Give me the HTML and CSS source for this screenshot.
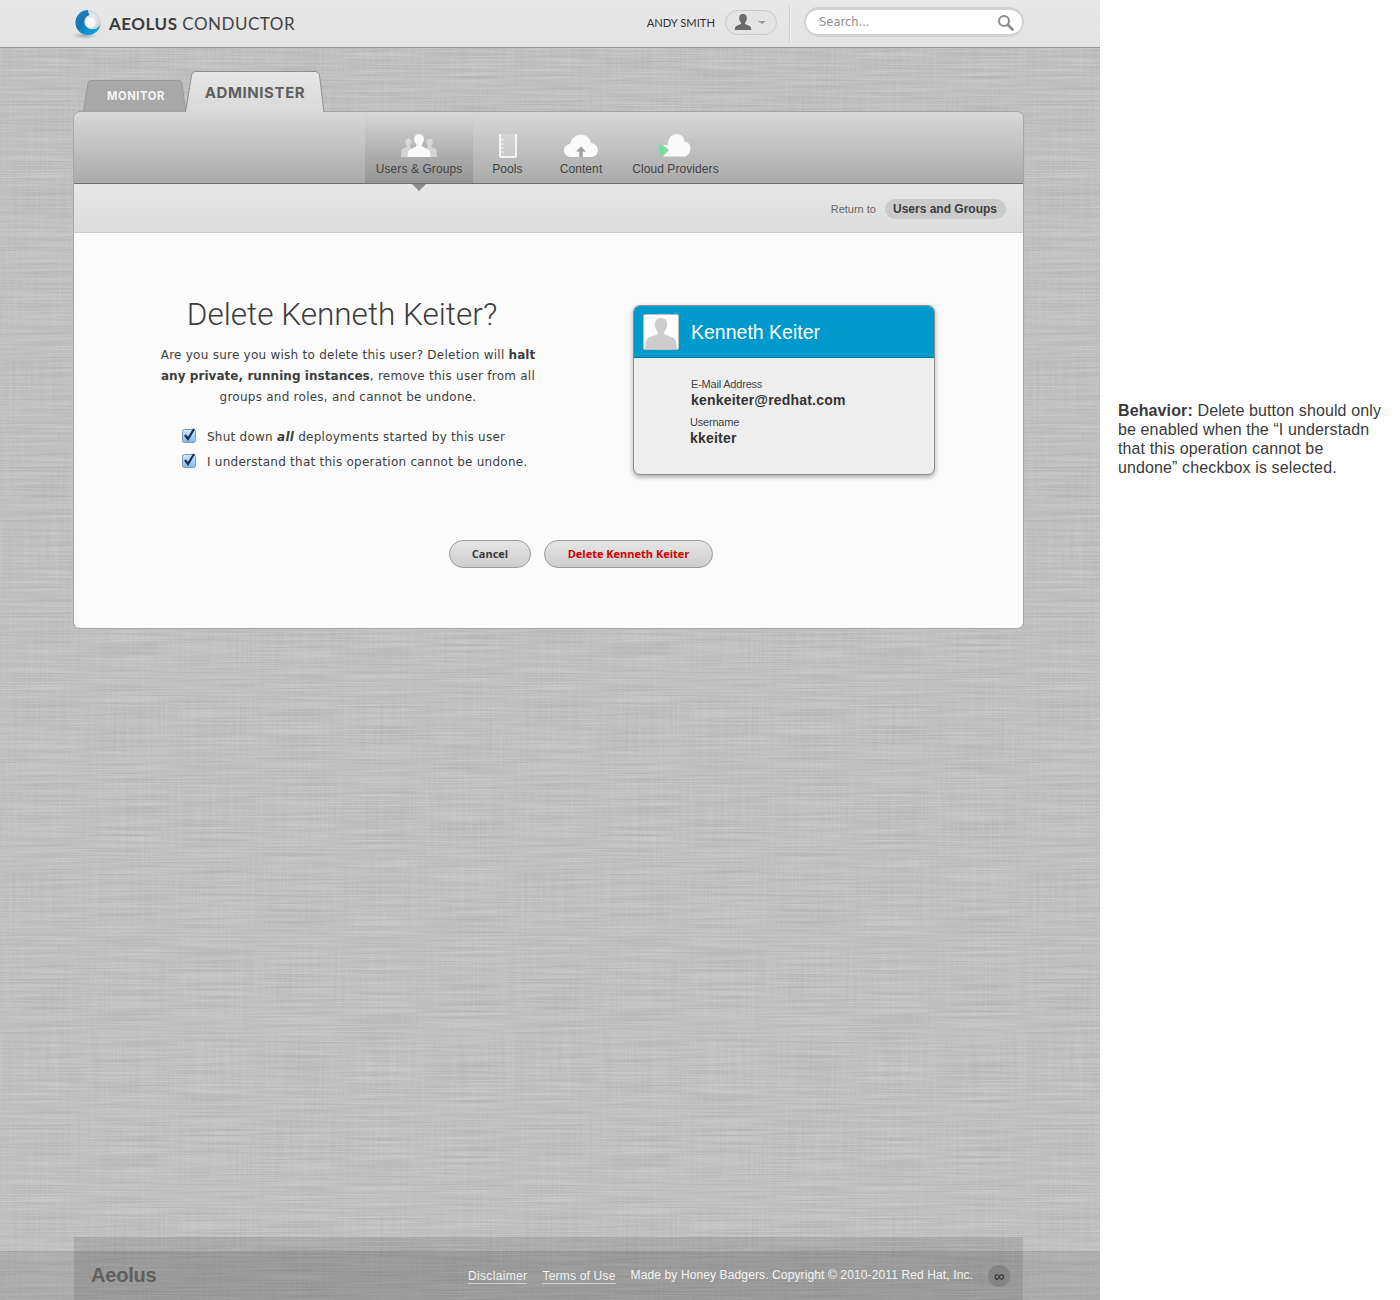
FILE: index.html
```html
<!DOCTYPE html>
<html lang="en">
<head>
<meta charset="utf-8">
<title>Aeolus Conductor</title>
<link rel="stylesheet" href="styles.css">
</head>
<body>
<div class="layout">
  <div class="main">
    <header class="topbar">
      <div class="topbar-inner">
        <div class="brand">
          <svg class="logo" width="32" height="32" viewBox="0 0 32 32">
            <defs>
              <radialGradient id="sphere" cx="0.6" cy="0.4" r="0.62"><stop offset="0" stop-color="#ffffff"/><stop offset="0.5" stop-color="#dadde2"/><stop offset="1" stop-color="#aab2bd"/></radialGradient>
              <linearGradient id="blue" x1="0" y1="0" x2="0.7" y2="1"><stop offset="0" stop-color="#2f7fb5"/><stop offset="0.5" stop-color="#1079b8"/><stop offset="1" stop-color="#0ea4dc"/></linearGradient>
              <radialGradient id="drop" cx="0.5" cy="0.5" r="0.5"><stop offset="0" stop-color="#6f8296" stop-opacity=".6"/><stop offset="1" stop-color="#6f8296" stop-opacity="0"/></radialGradient>
            </defs>
            <ellipse cx="13" cy="27.500" rx="13" ry="3.500" fill="url(#drop)"/>
            <circle cx="16" cy="14.500" r="12.500" fill="url(#sphere)"/>
            <path d="M16 2C9 2 3.500 7.500 3.500 14.500S9 27 16 27c6.300 0 11.300-4.500 12.300-10.300-1.500 2.700-4.800 4.800-8.300 4.500-4.500-.4-7.800-3.700-7.500-8 .2-3.400 2.300-5.600 5.300-6.300C16.500 5.800 16 4 16 2z" fill="url(#blue)"/>
            <circle cx="18.500" cy="14.500" r="5.600" fill="#f8f9fa" stroke="#c9ced4" stroke-width=".6"/>
          </svg>
          <span class="brand-name"><b>AEOLUS</b> CONDUCTOR</span>
        </div>
        <div class="top-right">
          <span class="user-name">ANDY SMITH</span>
          <button class="user-btn" type="button" aria-label="User menu">
            <svg width="20" height="17" viewBox="0 0 20 17"><path d="M10 0c-2.800 0-4 2.100-3.800 4.400.1 1.700.8 3.100 1.700 4 .4.500.2 1.400-.5 1.800-1.700.9-5 1.500-5.400 3.600L1.700 16h16.600l-.3-2.200c-.4-2.100-3.700-2.700-5.400-3.600-.7-.4-.9-1.300-.5-1.800.9-.9 1.600-2.300 1.700-4C14 2.100 12.800 0 10 0z" fill="#6a6a6a"/></svg>
            <span class="caret"></span>
          </button>
          <span class="divider"></span>
          <div class="search">
            <span class="search-field">
              <span class="search-text">Search...</span>
              <svg width="17" height="17" viewBox="0 0 17 17"><circle cx="7" cy="7" r="5" fill="none" stroke="#8d8d8d" stroke-width="2"/><path d="M10.800 10.800l4.700 4.700" stroke="#8d8d8d" stroke-width="2.800" stroke-linecap="round"/></svg>
            </span>
          </div>
        </div>
      </div>
    </header>

    <div class="container">
      <nav class="tabs">
        <a class="tab tab-monitor">
          <svg class="tab-shape" width="104" height="31" viewBox="0 0 104 31"><path d="M.5 31L5 3C5.400 1.500 6.500.5 8 .5h88c1.500 0 2.700 1 3 2.500l3.500 28z" fill="#a8a8a8" stroke="#9a9a9a"/></svg>
          <span class="tab-label">MONITOR</span>
        </a>
        <a class="tab tab-administer">
          <svg class="tab-shape" width="140" height="41" viewBox="0 0 140 41"><defs><linearGradient id="tabg" x1="0" y1="0" x2="0" y2="1"><stop offset="0" stop-color="#e6e6e6"/><stop offset="1" stop-color="#d9d9d9"/></linearGradient></defs><path d="M.5 41L6.500 4.500C7 2 8.500.5 11 .5h119c2.500 0 4 1.500 4.500 4L139 41" fill="url(#tabg)" stroke="#8e8e8e"/></svg>
          <span class="tab-label">ADMINISTER</span>
        </a>
      </nav>

      <section class="panel">
        <div class="nav">
          <a class="nav-item nav-active">
            <svg width="36" height="26" viewBox="0 0 36 26">
              <g fill="#ececec" opacity=".6"><path d="M7.500 5.500c-2.500 0-3.500 2-3.300 4 .1 1.300.7 2.500 1.400 3.200.3.500.1 1-.4 1.400C3.500 15 .8 15.500.4 17.500L0 24h7l.5-5 3-3.500-1-1.300c-.5-.4-.7-.9-.4-1.500.7-.7 1.300-1.900 1.400-3.200.2-2-.8-4-3.500-4z"/><path d="M28.500 5.500c2.500 0 3.500 2 3.300 4-.1 1.300-.7 2.500-1.400 3.200-.3.500-.1 1 .4 1.400 1.700.9 4.400 1.400 4.800 3.400L36 24h-7l-.5-5-3-3.500 1-1.300c.5-.4.7-.9.4-1.500-.7-.7-1.300-1.900-1.400-3.200-.2-2 .8-4 3.500-4z"/></g>
              <path d="M18 1c-3.500 0-5 2.800-4.700 5.500.2 2 1 3.700 2.100 4.900.4.800.1 1.800-.7 2.300C12 15 7.500 16 7 19l-.4 5h22.800L29 19c-.5-3-5-4-7.500-5.300-.8-.5-1.100-1.500-.7-2.300 1.100-1.200 1.900-2.900 2.100-4.900C23 3.800 21.500 1 18 1z" fill="#fafafa"/>
            </svg>
            <span>Users &amp; Groups</span>
          </a>
          <a class="nav-item nav-pools">
            <svg width="20" height="26" viewBox="0 0 20 26">
              <path d="M2 1v21.500c0 1 .7 1.500 1.500 1.500h13c.8 0 1.500-.5 1.500-1.500V1" fill="rgba(255,255,255,.2)" stroke="#f4f4f4" stroke-width="2"/>
              <path d="M3 7h3M3 11h3M3 15h3M3 19h3" stroke="#f4f4f4" stroke-width="1"/>
            </svg>
            <span>Pools</span>
          </a>
          <a class="nav-item nav-content">
            <svg width="36" height="26" viewBox="0 0 36 26">
              <path d="M8 24C3.500 24 1 21 1 17.500S3.500 11.500 7 11C8 6 12.500 1.500 18 1.500c5 0 9 3.500 10 8.500 4 .5 7 3.500 7 7.300 0 3.700-3 6.700-7 6.700z" fill="#fafafa"/>
              <path d="M18 13.500l-5 5h3.300V24h3.400v-5.500H23z" fill="#9e9e9e"/>
            </svg>
            <span>Content</span>
          </a>
          <a class="nav-item nav-cloud">
            <svg width="34" height="26" viewBox="0 0 34 26">
              <path d="M6 12h5C11 6 14 1 19.500 1c4.500 0 7.500 3 8 7.500 3.500.5 6 3 6 6.500 0 4.500-3 8.500-6 8.500H6l6-6.500z" fill="#fafafa"/>
              <path d="M2 10v14l9-7z" fill="#6fe39a"/>
            </svg>
            <span>Cloud Providers</span>
          </a>
        </div>

        <div class="subnav">
          <span class="return-label">Return to</span>
          <a class="return-link">Users and Groups</a>
        </div>

        <div class="content">
          <div class="columns">
            <div class="message">
              <h1>Delete Kenneth Keiter?</h1>
              <p class="lead">Are you sure you wish to delete this user? Deletion will <b>halt<br>any private, running instances</b>, remove this user from all<br>groups and roles, and cannot be undone.</p>
              <ul class="checks">
                <li class="check">
                  <svg class="box" width="14" height="15" viewBox="0 0 14 15"><defs><linearGradient id="cb" x1="0" y1="0" x2="0" y2="1"><stop offset="0" stop-color="#d4e8fb"/><stop offset="1" stop-color="#7dbbef"/></linearGradient></defs><rect x=".5" y="1.500" width="13" height="13" rx="2" fill="url(#cb)" stroke="#8098b0"/><path d="M3 7l3 4 6-10" fill="none" stroke="#1d2f4f" stroke-width="2.200"/></svg>
                  <span>Shut down <b><i>all</i></b> deployments started by this user</span>
                </li>
                <li class="check">
                  <svg class="box" width="14" height="15" viewBox="0 0 14 15"><rect x=".5" y="1.500" width="13" height="13" rx="2" fill="url(#cb)" stroke="#8098b0"/><path d="M3 7l3 4 6-10" fill="none" stroke="#1d2f4f" stroke-width="2.200"/></svg>
                  <span>I understand that this operation cannot be undone.</span>
                </li>
              </ul>
            </div>

            <aside class="card">
              <div class="card-head">
                <span class="avatar">
                  <svg width="34" height="34" viewBox="0 0 34 34"><path d="M17 3c-4.500 0-6.500 3.300-6.200 7 .2 2.800 1.400 5 2.800 6.500.7.800.4 2.300-.7 2.900-3 1.500-9.500 2.600-10.600 5.800-.7 2-.9 4.500-1.300 8.800h32c-.4-4.300-.6-6.800-1.300-8.800-1.100-3.200-7.600-4.300-10.600-5.800-1.100-.6-1.400-2.100-.7-2.900 1.400-1.500 2.600-3.700 2.800-6.500.3-3.700-1.700-7-6.200-7z" fill="#cdcdcd"/></svg>
                </span>
                <span class="card-name">Kenneth Keiter</span>
              </div>
              <div class="card-body">
                <div class="field field-email">
                  <span class="field-label">E-Mail Address</span>
                  <span class="field-value">kenkeiter@redhat.com</span>
                </div>
                <div class="field field-user">
                  <span class="field-label">Username</span>
                  <span class="field-value">kkeiter</span>
                </div>
              </div>
            </aside>
          </div>

          <div class="actions">
            <button class="btn btn-cancel" type="button">Cancel</button>
            <button class="btn btn-delete" type="button">Delete Kenneth Keiter</button>
          </div>
        </div>
      </section>
    </div>

    <footer class="footer">
      <div class="footer-inner">
        <span class="footer-brand">Aeolus</span>
        <div class="footer-links">
          <a class="footer-link">Disclaimer</a>
          <a class="footer-link footer-terms">Terms of Use</a>
          <span>Made by Honey Badgers. Copyright © 2010-2011 Red Hat, Inc.</span>
          <span class="badge">∞</span>
        </div>
      </div>
    </footer>
  </div>

  <aside class="note">
    <p><b>Behavior:</b> Delete button should only be enabled when the “I understadn that this operation cannot be undone” checkbox is selected.</p>
  </aside>
</div>
</body>
</html>
```

FILE: styles.css
```css
* { box-sizing: border-box; }
html, body { margin: 0; padding: 0; background: #fff; }
body { font-family: "Liberation Sans", Arial, sans-serif; color: #333; }
a { color: inherit; text-decoration: none; }
button { font: inherit; padding: 0; cursor: pointer; }
h1, p, ul { margin: 0; padding: 0; }
ul { list-style: none; }

.layout { display: flex; width: 1400px; height: 1300px; overflow: hidden; }

.main {
  width: 1100px;
  height: 1300px;
  display: flex;
  flex-direction: column;
  background-color: #c4c4c4;
  background-image: url("data:image/svg+xml,%3Csvg xmlns='http://www.w3.org/2000/svg' width='512' height='512'%3E%3Cfilter id='h' x='0' y='0' width='100%25' height='100%25'%3E%3CfeTurbulence type='fractalNoise' baseFrequency='0.012 0.7' numOctaves='2' seed='3' stitchTiles='stitch'/%3E%3CfeColorMatrix values='0 0 0 0 0 0 0 0 0 0 0 0 0 0 0 .16 0 0 0 -.045'/%3E%3C/filter%3E%3Cfilter id='v' x='0' y='0' width='100%25' height='100%25'%3E%3CfeTurbulence type='fractalNoise' baseFrequency='0.7 0.012' numOctaves='2' seed='8' stitchTiles='stitch'/%3E%3CfeColorMatrix values='0 0 0 0 1 0 0 0 0 1 0 0 0 0 1 .16 0 0 0 -.045'/%3E%3C/filter%3E%3Crect width='512' height='512' filter='url(%23h)'/%3E%3Crect width='512' height='512' filter='url(%23v)'/%3E%3C/svg%3E");
}

/* top bar */
.topbar {
  height: 48px;
  flex: none;
  background: linear-gradient(#e8e8e8, #e3e3e3);
  border-bottom: 1px solid #969696;
}
.topbar-inner {
  width: 951px;
  margin-left: 73px;
  height: 47px;
  display: flex;
  justify-content: space-between;
  align-items: flex-start;
}
.brand { display: flex; align-items: center; height: 47px; }
.logo { margin-left: -1px; margin-top: 1px; }
.brand-name {
  margin-left: 5px;
  font-family: Lato, "Liberation Sans", sans-serif;
  font-size: 17px;
  letter-spacing: .5px;
  color: #444;
}
.brand-name b { font-weight: 700; color: #3c3c3c; }
.top-right { display: flex; align-items: flex-start; height: 47px; }
.user-name {
  margin-top: 16px;
  font-family: Lato, "Liberation Sans", sans-serif;
  font-size: 11.200px;
  color: #333;
}
.user-btn {
  margin: 10px 0 0 10px;
  width: 52px;
  height: 25px;
  border: 1px solid #c9c9c9;
  border-radius: 13px;
  background: #e4e4e4;
  display: flex;
  align-items: center;
  padding-left: 7px;
  gap: 5px;
}
.caret { width: 0; height: 0; border-left: 4px solid transparent; border-right: 4px solid transparent; border-top: 3px solid #9a9a9a; }
.divider { width: 2px; height: 38px; margin: 5px 13px 0 12px; background: #d2d2d2; border-right: 1px solid #efefef; }
.search {
  width: 220px;
  height: 30px;
  margin-top: 7px;
  padding: 3px 2px;
  border-radius: 15px;
  background: #d2d2d2;
}
.search-field {
  height: 24px;
  border-radius: 12px;
  background: #fff;
  display: flex;
  align-items: center;
  justify-content: space-between;
  padding: 0 8px 0 13px;
}
.search-text { font-family: "DejaVu Sans", sans-serif; font-size: 11.500px; color: #8c8c8c; }

/* tabs */
.container { width: 951px; margin-left: 73px; flex: none; }
.tabs { height: 63px; display: flex; align-items: flex-end; padding-left: 10px; }
.tab { position: relative; display: flex; align-items: center; justify-content: center; }
.tab-shape { position: absolute; left: 0; top: 0; }
.tab-label { position: relative; font-family: Inter, "Liberation Sans", sans-serif; font-weight: 700; }
.tab-monitor { width: 104px; height: 31px; margin-right: -2px; }
.tab-monitor .tab-label { font-size: 11.200px; color: #f5f5f5; letter-spacing: .6px; left: 1px; }
.tab-administer { width: 140px; height: 41px; z-index: 1; margin-bottom: -1px; }
.tab-administer .tab-label { font-size: 15px; color: #5f5f5f; letter-spacing: .6px; top: 1px; }

/* panel */
.panel {
  border: 1px solid #a6a6a6;
  border-radius: 7px;
  overflow: hidden;
}
.nav {
  height: 72px;
  background: linear-gradient(#d8d8d8, #aaaaaa);
  border-bottom: 1px solid #6e6e6e;
  display: flex;
  padding-left: 291px;
}
.nav-item {
  display: flex;
  flex-direction: column;
  align-items: center;
  justify-content: flex-end;
  gap: 3px;
  padding-bottom: 7px;
  font-size: 12px;
  letter-spacing: .08px;
  color: #444;
  height: 71px;
  position: relative;
}
.nav-active {
  width: 108px;
  background: linear-gradient(rgba(0,0,0,0), rgba(0,0,0,.13));
}
.nav-active::after {
  content: "";
  position: absolute;
  left: 47px;
  top: 72px;
  border-left: 7px solid transparent;
  border-right: 7px solid transparent;
  border-top: 7px solid #8b8b8b;
}
.nav-pools { width: 69px; }
.nav-content { width: 78px; }
.nav-cloud { width: 111px; }
.nav-cloud svg { margin-right: 4px; }
.subnav {
  height: 49px;
  background: linear-gradient(#e7e7e7, #dcdcdc);
  border-bottom: 1px solid #cacaca;
  display: flex;
  align-items: center;
  justify-content: flex-end;
  padding: 1px 17px 0 0;
}
.return-label { font-size: 11px; color: #666; margin-right: 9px; }
.return-link {
  height: 20px;
  line-height: 20px;
  padding: 0 9px 0 8px;
  border-radius: 10px;
  background: #cbcbcb;
  font-size: 12px;
  font-weight: 700;
  color: #3d3d3d;
}

/* content */
.content {
  height: 395px;
  background: #fbfbfb;
  padding-top: 64px;
}
.columns { display: flex; align-items: flex-start; }
.message { width: 559px; padding-left: 76px; }
h1 {
  font-family: Roboto, "Liberation Sans", sans-serif;
  font-size: 31.500px;
  font-weight: 300;
  line-height: 36px;
  color: #3c3c3c;
  width: 384px;
  text-align: center;
}
.lead {
  width: 396px;
  margin-top: 12px;
  font-family: "DejaVu Sans", sans-serif;
  font-size: 12px;
  line-height: 21px;
  color: #3e3e3e;
  text-align: center;
  letter-spacing: .25px;
}
.lead b { letter-spacing: .05px; }
.checks { margin-top: 16px; padding-left: 32px; }
.check {
  display: flex;
  align-items: center;
  gap: 11px;
  height: 25px;
  font-family: "DejaVu Sans", sans-serif;
  font-size: 12px;
  color: #3e3e3e;
  letter-spacing: .25px;
}
.box { flex: none; margin-top: -2px; }

.card {
  width: 302px;
  height: 170px;
  margin-top: 8px;
  border: 1px solid #8f8f8f;
  border-radius: 7px;
  overflow: hidden;
  background: #eeeeee;
  box-shadow: 0 2px 5px rgba(0,0,0,.35);
}
.card-head {
  height: 52px;
  background: #0099cc;
  border-bottom: 1px solid #0078a8;
  display: flex;
  align-items: center;
  padding-left: 9px;
  gap: 12px;
}
.avatar {
  width: 36px;
  height: 36px;
  border: 1px solid #bdbdbd;
  border-radius: 2px;
  background: #fff;
  overflow: hidden;
  display: block;
}
.avatar svg { display: block; }
.card-name { font-size: 19.500px; color: #fff; position: relative; top: 1px; }
.card-body { padding: 19px 0 0 56px; }
.field { display: flex; flex-direction: column; }
.field-email { margin-left: 1px; }
.field-user { margin-top: 6px; }
.field-label { font-size: 11px; line-height: 14px; color: #444; letter-spacing: -.2px; }
.field-value { font-size: 14px; line-height: 18px; font-weight: 700; color: #333; letter-spacing: .2px; }

.actions { display: flex; gap: 13px; margin-top: 65px; padding-left: 375px; }
.btn {
  height: 28px;
  padding-bottom: 2px;
  border: 1px solid #9c9c9c;
  border-radius: 14px;
  background: linear-gradient(#e6e6e6, #cdcdcd);
  font-family: "Open Sans", sans-serif;
  font-size: 11px;
  font-weight: 700;
}
.btn-cancel { width: 82px; color: #3a3a3a; }
.btn-delete { width: 169px; color: #d40000; }

/* footer */
.footer {
  margin-top: auto;
  height: 63px;
  flex: none;
  background: linear-gradient(transparent 14px, rgba(0,0,0,.1) 14px);
}
.footer-inner {
  width: 949px;
  height: 63px;
  margin-left: 74px;
  background: rgba(0,0,0,.1);
  display: flex;
  justify-content: space-between;
  align-items: center;
  padding: 14px 13px 0 17px;
}
.footer-brand { font-size: 20px; font-weight: 700; color: #606060; letter-spacing: -.2px; }
.footer-links { display: flex; align-items: center; gap: 15px; font-size: 12px; color: #f4f4f4; letter-spacing: .12px; line-height: 15px; }
.footer-link { border-bottom: 1px solid #d0d0d0; line-height: 13px; letter-spacing: .35px; margin-top: 2px; }
.footer-terms { letter-spacing: .2px; }
.badge {
  width: 22px;
  height: 22px;
  border-radius: 11px;
  background: #858585;
  color: #222;
  font-size: 14px;
  text-align: center;
  line-height: 22px;
  letter-spacing: 0;
}

/* annotation */
.note { width: 300px; padding: 401px 18px 0 18px; }
.note p { font-size: 16px; line-height: 19px; color: #3a3a3a; width: 264px; letter-spacing: .12px; }
.note b { font-weight: 700; }
```
